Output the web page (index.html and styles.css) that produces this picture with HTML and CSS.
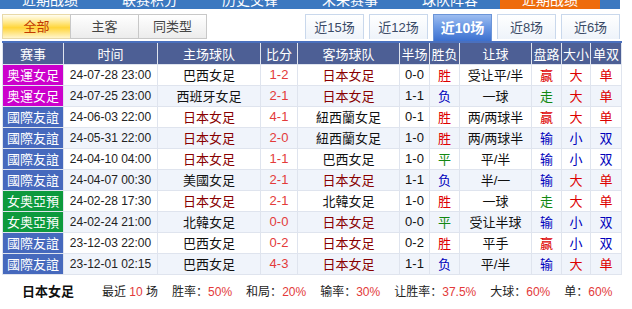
FILE: index.html
```html
<!DOCTYPE html>
<html lang="zh">
<head>
<meta charset="utf-8">
<link rel="stylesheet" href="styles.css">
</head>
<body>
<div class="nav">
  <span class="nav-item">近期战绩</span>
  <span class="nav-item">联赛积分</span>
  <span class="nav-item">历史交锋</span>
  <span class="nav-item">未来赛事</span>
  <span class="nav-item">球队阵容</span>
  <span class="nav-item active">近期战绩</span>
</div>
<div class="tabs">
  <div class="tab-group left">
    <span class="ltab on">全部</span>
    <span class="ltab">主客</span>
    <span class="ltab">同类型</span>
  </div>
  <div class="tab-group right">
    <span class="rtab">近15场</span>
    <span class="rtab">近12场</span>
    <span class="rtab on">近10场</span>
    <span class="rtab">近8场</span>
    <span class="rtab">近6场</span>
  </div>
</div>
<table class="grid">
  <colgroup>
    <col class="c1"><col class="c2"><col class="c3"><col class="c4"><col class="c5"><col class="c6"><col class="c7"><col class="c8"><col class="c9"><col class="c10"><col class="c11">
  </colgroup>
  <thead>
    <tr><th>赛事</th><th>时间</th><th>主场球队</th><th>比分</th><th>客场球队</th><th>半场</th><th>胜负</th><th>让球</th><th>盘路</th><th>大小</th><th>单双</th></tr>
  </thead>
  <tbody>
    <tr><td class="ev oly">奥運女足</td><td class="tm">24-07-28 23:00</td><td>巴西女足</td><td class="sc">1-2</td><td class="jp">日本女足</td><td>0-0</td><td class="r">胜</td><td>受让平/半</td><td class="r">赢</td><td class="r">大</td><td class="r">单</td></tr>
    <tr><td class="ev oly">奥運女足</td><td class="tm">24-07-25 23:00</td><td>西班牙女足</td><td class="sc">2-1</td><td class="jp">日本女足</td><td>1-1</td><td class="b">负</td><td>一球</td><td class="g">走</td><td class="r">大</td><td class="r">单</td></tr>
    <tr><td class="ev fr">國際友誼</td><td class="tm">24-06-03 22:00</td><td class="jp">日本女足</td><td class="sc">4-1</td><td>紐西蘭女足</td><td>0-1</td><td class="r">胜</td><td>两/两球半</td><td class="r">赢</td><td class="r">大</td><td class="r">单</td></tr>
    <tr><td class="ev fr">國際友誼</td><td class="tm">24-05-31 22:00</td><td class="jp">日本女足</td><td class="sc">2-0</td><td>紐西蘭女足</td><td>1-0</td><td class="r">胜</td><td>两/两球半</td><td class="b">输</td><td class="b">小</td><td class="b">双</td></tr>
    <tr><td class="ev fr">國際友誼</td><td class="tm">24-04-10 04:00</td><td class="jp">日本女足</td><td class="sc">1-1</td><td>巴西女足</td><td>1-0</td><td class="g">平</td><td>平/半</td><td class="b">输</td><td class="b">小</td><td class="b">双</td></tr>
    <tr><td class="ev fr">國際友誼</td><td class="tm">24-04-07 00:30</td><td>美國女足</td><td class="sc">2-1</td><td class="jp">日本女足</td><td>1-1</td><td class="b">负</td><td>半/一</td><td class="b">输</td><td class="r">大</td><td class="r">单</td></tr>
    <tr><td class="ev as">女奥亞預</td><td class="tm">24-02-28 17:30</td><td class="jp">日本女足</td><td class="sc">2-1</td><td>北韓女足</td><td>1-0</td><td class="r">胜</td><td>一球</td><td class="g">走</td><td class="r">大</td><td class="r">单</td></tr>
    <tr><td class="ev as">女奥亞預</td><td class="tm">24-02-24 21:00</td><td>北韓女足</td><td class="sc">0-0</td><td class="jp">日本女足</td><td>0-0</td><td class="g">平</td><td>受让半球</td><td class="b">输</td><td class="b">小</td><td class="b">双</td></tr>
    <tr><td class="ev fr">國際友誼</td><td class="tm">23-12-03 22:00</td><td>巴西女足</td><td class="sc">0-2</td><td class="jp">日本女足</td><td>0-2</td><td class="r">胜</td><td>平手</td><td class="r">赢</td><td class="b">小</td><td class="b">双</td></tr>
    <tr><td class="ev fr">國際友誼</td><td class="tm">23-12-01 02:15</td><td>巴西女足</td><td class="sc">4-3</td><td class="jp">日本女足</td><td>1-1</td><td class="b">负</td><td>平/半</td><td class="b">输</td><td class="r">大</td><td class="r">单</td></tr>
  </tbody>
</table>
<div class="summary">
  <span class="team">日本女足</span>
  <span class="stat">最近 <em>10</em> 场</span>
  <span class="stat">胜率：<em>50%</em></span>
  <span class="stat">和局：<em>20%</em></span>
  <span class="stat">输率：<em>30%</em></span>
  <span class="stat">让胜率：<em>37.5%</em></span>
  <span class="stat">大球：<em>60%</em></span>
  <span class="stat">单：<em>60%</em></span>
</div>
</body>
</html>
```

FILE: styles.css
```css
* { box-sizing: border-box; }
body {
  margin: 0;
  width: 632px;
  height: 309px;
  overflow: hidden;
  background: #fff;
  font-family: "Liberation Sans", "Noto Sans CJK SC", sans-serif;
  font-size: 12px;
  color: #222;
}
.nav {
  display: flex;
  width: 620px;
  height: 9px;
  overflow: hidden;
  background: #3b78c0;
}
.nav-item {
  flex: 0 0 100px;
  height: 9px;
  text-align: center;
  color: #fff;
  font-size: 14px;
  line-height: 0;
  white-space: nowrap;
}
.nav-item.active { background: #ee6c0c; }
.tabs {
  display: flex;
  justify-content: space-between;
  width: 621px;
  margin-top: 5px;
  padding-left: 2px;
  height: 27px;
  align-items: flex-end;
}
.tab-group { display: flex; }
.ltab {
  width: 69px;
  height: 25px;
  margin-right: -1px;
  margin-bottom: 2px;
  border: 1px solid #c8c8c8;
  background: linear-gradient(#ffffff, #ececec);
  text-align: center;
  line-height: 23px;
  font-size: 13px;
  color: #444;
}
.ltab.on {
  border-color: #e8d9a8;
  background: linear-gradient(#fffdf2 0%, #ffe680 35%, #ffd53a 55%, #fff5cc 100%);
  color: #c23a00;
}
.tab-group.right { gap: 5px; padding-right: 1px; }
.rtab {
  width: 59px;
  height: 25px;
  margin-bottom: 1px;
  border: 1px solid #c9d8ec;
  border-bottom: none;
  background: linear-gradient(#ffffff, #eef3fa);
  text-align: center;
  line-height: 25px;
  font-size: 13px;
  color: #3a4a66;
}
.rtab.on {
  height: 27px;
  margin-bottom: 0;
  border-color: #6b95d8;
  background: linear-gradient(#9dbdf0 0%, #6a98e4 45%, #3c70cf 100%);
  color: #fff;
  font-weight: bold;
  line-height: 27px;
  font-size: 14px;
}
.grid {
  margin-left: 2px;
  width: 619px;
  border-collapse: collapse;
  table-layout: fixed;
  border-top: 2px solid #4a70be;
}
.c1 { width: 61px; } .c2 { width: 94px; } .c3 { width: 103px; } .c4 { width: 37px; }
.c5 { width: 102px; } .c6 { width: 30px; } .c7 { width: 30px; } .c8 { width: 72px; }
.c9 { width: 30px; } .c10 { width: 29px; } .c11 { width: 31px; }
.grid th {
  height: 22px;
  padding: 0;
  background: #4d5f95;
  color: #fff;
  font-weight: normal;
  font-size: 13px;
  border: 1px solid #dfe4ee;
  border-top: none;
  text-align: center;
}
.grid td {
  height: 21px;
  padding: 0;
  text-align: center;
  border: 1px solid #dfe4ee;
  white-space: nowrap;
  font-size: 13px;
  color: #111;
}
.grid tbody tr:nth-child(even) td { background: #f0f4fb; }
.grid td.ev { color: #fff; font-size: 13px; }
.grid tbody td.oly { background: #cc00cc; }
.grid tbody td.fr { background: #4669bd; }
.grid tbody td.as { background: #0d9a3d; }
.grid tbody tr:nth-child(even) td.oly { background: #cc00cc; }
.grid tbody tr:nth-child(even) td.fr { background: #4669bd; }
.grid tbody tr:nth-child(even) td.as { background: #0d9a3d; }
.grid td.tm { color: #222; font-size: 12px; }
.grid td.sc { color: #e33a3a; }
.grid td.jp { color: #880000; }
.grid td.r { color: #dd0000; }
.grid td.b { color: #0000bb; }
.grid td.g { color: #118811; }
.summary {
  display: flex;
  align-items: center;
  height: 32px;
  padding-left: 22px;
  gap: 14px;
  font-size: 12px;
  color: #222;
  white-space: nowrap;
}
.stat, .team { flex: 0 0 auto; }
.summary em { font-style: normal; color: #e33a3a; }
.team { font-weight: bold; font-size: 13px; color: #111; margin-right: 14px; }
```
